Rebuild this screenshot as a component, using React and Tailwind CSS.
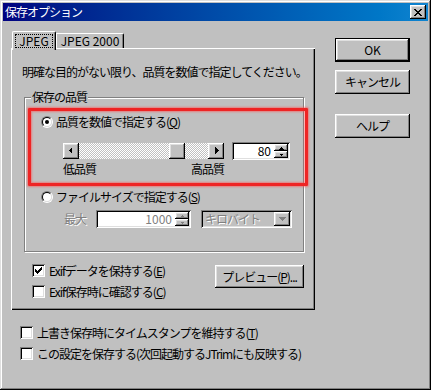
import React from 'react';

const raised =
  'bg-[#c0c0c0] shadow-[inset_-1px_-1px_#000,inset_1px_1px_#fff,inset_-2px_-2px_#808080,inset_2px_2px_#dfdfdf]';
const sunken =
  'shadow-[inset_1px_1px_#808080,inset_-1px_-1px_#fff,inset_2px_2px_#000,inset_-2px_-2px_#dfdfdf]';
const grayText = 'text-[#808080] [text-shadow:1px_1px_0_#fff]';

function Arrow({ dir, color = '#000' }) {
  // tiny pixel triangles used by scroll / spin / combo buttons
  const pts = {
    left: '9,4 9,11 5.5,7.5',
    right: '7,4 7,11 10.5,7.5',
  };
  return (
    <svg width="16" height="16" viewBox="0 0 16 16" shapeRendering="crispEdges">
      <polygon points={pts[dir]} fill={color} />
    </svg>
  );
}

function SpinButtons({ disabled }) {
  const c = disabled ? '#808080' : '#000';
  return (
    <div className="flex flex-col w-[14px] h-full">
      <div className={`flex-1 flex items-center justify-center ${raised}`}>
        <svg width="7" height="4" viewBox="0 0 7 4" shapeRendering="crispEdges">
          <polygon points="3.5,0.5 6,3.5 1,3.5" fill={c} />
        </svg>
      </div>
      <div className={`flex-1 flex items-center justify-center ${raised}`}>
        <svg width="7" height="4" viewBox="0 0 7 4" shapeRendering="crispEdges">
          <polygon points="1,0.5 6,0.5 3.5,3.5" fill={c} />
        </svg>
      </div>
    </div>
  );
}

function Radio({ checked }) {
  return (
    <div className="w-[12px] h-[12px] rounded-full border border-t-[#808080] border-l-[#808080] border-r-white border-b-white">
      <div className="w-full h-full rounded-full bg-white border border-t-black border-l-black border-r-[#dfdfdf] border-b-[#dfdfdf] flex items-center justify-center">
        {checked && <div className="w-[4px] h-[4px] rounded-full bg-black" />}
      </div>
    </div>
  );
}

function Check({ checked }) {
  return (
    <div className={`w-[13px] h-[13px] bg-white flex items-center justify-center ${sunken}`}>
      {checked && (
        <svg width="7" height="7" viewBox="0 0 7 7" shapeRendering="crispEdges">
          <path d="M0 2h1v1h1v1h1v-1h1v-1h1v-1h1v-1h1v3h-1v1h-1v1h-1v1h-1v1h-1v-1h-1v-1h-1v-1h-1z" fill="#000" />
        </svg>
      )}
    </div>
  );
}

function Button({ children, isDefault, className = '' }) {
  return (
    <div
      className={`flex items-center justify-center ${isDefault ? 'border border-black' : ''} ${className}`}
    >
      <div className={`w-full h-full flex items-center justify-center ${raised}`}>{children}</div>
    </div>
  );
}

function ScrollBar({ value }) {
  return (
    <div className="flex w-[161px] h-[16px]">
      <div className={`w-[16px] h-[16px] ${raised}`}>
        <Arrow dir="left" />
      </div>
      <div className="flex flex-1 bg-[image:repeating-conic-gradient(#c0c0c0_0%_25%,#fff_0%_50%)] bg-[length:2px_2px]">
        <div style={{ flexGrow: value }} />
        <div className={`w-[16px] h-[16px] ${raised}`} />
        <div style={{ flexGrow: 100 - value }} />
      </div>
      <div className={`w-[16px] h-[16px] ${raised}`}>
        <Arrow dir="right" />
      </div>
    </div>
  );
}

export default function App() {
  const quality = 80;

  return (
    <div className="relative w-[431px] h-[390px] bg-[#c0c0c0] p-[3px] font-['Noto_Sans_CJK_JP',sans-serif] text-[12px] leading-[12px] tracking-[-1px] text-black shadow-[inset_-1px_-1px_#000,inset_1px_1px_#dfdfdf,inset_-2px_-2px_#808080,inset_2px_2px_#fff] overflow-hidden select-none">
      {/* Title bar */}
      <div className="flex h-[18px] items-center justify-between bg-gradient-to-r from-[#000080] to-[#1084d0] px-[2px]">
        <span className="text-white">保存オプション</span>
        <div className={`w-[16px] h-[14px] flex items-center justify-center ${raised}`}>
          <svg width="8" height="7" viewBox="0 0 8 7" shapeRendering="crispEdges">
            <path d="M0 0h2v1h1v1h2v-1h1v-1h2v1h-1v1h-1v1h-1v1h1v1h1v1h1v1h-2v-1h-1v-1h-2v1h-1v1h-2v-1h1v-1h1v-1h1v-1h-1v-1h-1v-1h-1z" fill="#000" />
          </svg>
        </div>
      </div>

      {/* Body */}
      <div className="flex pl-[8px] pt-[10px]">
        {/* Tab control */}
        <div className="w-[304px]">
          <div className="flex items-end h-[17px] pl-[1px]">
            <div className="relative z-10 mb-[-2px] w-[44px] h-[19px] bg-[#c0c0c0] border-t border-l border-white rounded-tl-[2px] rounded-tr-[2px] border-r border-r-black shadow-[inset_-1px_0_#808080] flex items-start justify-center pt-[2px]">
              <span className="border border-dotted border-black px-[3px] h-[14px] flex items-center tracking-normal">
                JPEG
              </span>
            </div>
            <div className="w-[68px] h-[15px] border-t border-l border-white rounded-tr-[2px] border-r border-r-black shadow-[inset_-1px_0_#808080] flex items-center justify-center tracking-normal">
              JPEG 2000
            </div>
          </div>

          <div className="h-[262px] shadow-[inset_1px_1px_#fff,inset_-1px_-1px_#000,inset_-2px_-2px_#808080] flex flex-col">
            <p className="ml-[11px] mt-[18px] h-[12px] whitespace-nowrap">
              明確な目的がない限り、品質を数値で指定してください。
            </p>

            <fieldset className="ml-[13px] mt-[13px] w-[280px] border border-[#808080] shadow-[1px_1px_0_#fff,inset_1px_1px_0_#fff] pb-[23px] flex flex-col">
              <legend className="ml-[6px] px-[1px] h-[12px] bg-[#c0c0c0]">保存の品質</legend>

              <div className="mt-[13px] ml-[16px] h-[12px] flex items-center gap-[3px]">
                <Radio checked />
                <span>
                  品質を数値で指定する(<u>Q</u>)
                </span>
              </div>

              <div className="mt-[14px] ml-[38px] h-[18px] flex items-center gap-[8px]">
                <ScrollBar value={quality} />
                <div className={`w-[58px] h-[18px] bg-white flex p-[2px] ${sunken}`}>
                  <div className="flex-1 flex items-center justify-end pr-[3px] tracking-normal">{quality}</div>
                  <SpinButtons />
                </div>
              </div>

              <div className="mt-[3px] ml-[38px] w-[161px] h-[12px] flex justify-between">
                <span>低品質</span>
                <span>高品質</span>
              </div>

              <div className="mt-[16px] ml-[16px] h-[12px] flex items-center gap-[3px]">
                <Radio />
                <span>
                  ファイルサイズで指定する(<u>S</u>)
                </span>
              </div>

              <div className="mt-[7px] ml-[39px] h-[18px] flex items-center">
                <span className={`w-[32px] ${grayText}`}>最大</span>
                <div className={`w-[95px] h-[18px] bg-white flex p-[2px] ${sunken}`}>
                  <div className={`flex-1 flex items-center justify-end pr-[3px] tracking-normal ${grayText}`}>1000</div>
                  <SpinButtons disabled />
                </div>
                <div className={`ml-[10px] w-[91px] h-[18px] bg-[#c0c0c0] flex items-center p-[2px] ${sunken}`}>
                  <span className={`flex-1 pl-[2px] ${grayText}`}>キロバイト</span>
                  <div className={`w-[16px] h-[14px] flex items-center justify-center ${raised}`}>
                    <svg width="7" height="4" viewBox="0 0 7 4" shapeRendering="crispEdges">
                      <polygon points="0,0 7,0 3.5,4" fill="#808080" />
                    </svg>
                  </div>
                </div>
              </div>
            </fieldset>

            <div className="mt-[12px] flex items-start">
              <div className="ml-[21px] flex flex-col gap-[8px]">
                <div className="h-[13px] flex items-center gap-[4px]">
                  <Check checked />
                  <span>
                    Exifデータを保持する(<u>E</u>)
                  </span>
                </div>
                <div className="h-[13px] flex items-center gap-[4px]">
                  <Check />
                  <span>
                    Exif保存時に確認する(<u>C</u>)
                  </span>
                </div>
              </div>
              <Button className="ml-auto mr-[11px] mt-[1px] w-[89px] h-[23px]">
                プレビュー(<u>P</u>)...
              </Button>
            </div>
          </div>
        </div>

        {/* Dialog buttons */}
        <div className="ml-[20px] pt-[7px] flex flex-col">
          <Button isDefault className="w-[75px] h-[24px] tracking-normal">
            OK
          </Button>
          <Button className="mt-[8px] w-[75px] h-[24px]">キャンセル</Button>
          <Button className="mt-[20px] w-[75px] h-[24px]">ヘルプ</Button>
        </div>
      </div>

      {/* Options below the tabs */}
      <div className="mt-[16px] pl-[17px] flex flex-col gap-[8px]">
        <div className="h-[13px] flex items-center gap-[4px]">
          <Check />
          <span>
            上書き保存時にタイムスタンプを維持する(<u>T</u>)
          </span>
        </div>
        <div className="h-[13px] flex items-center gap-[4px]">
          <Check />
          <span>この設定を保存する(次回起動するJTrimにも反映する)</span>
        </div>
      </div>

      {/* red highlight drawn over the dialog */}
      <div className="absolute left-[28px] top-[108px] w-[280px] h-[78px] border-[3px] border-[#ee2424] rounded-[1px] shadow-[0_0_2px_1px_rgba(255,80,80,0.6),inset_0_0_2px_1px_rgba(255,80,80,0.6)] pointer-events-none" />
    </div>
  );
}
